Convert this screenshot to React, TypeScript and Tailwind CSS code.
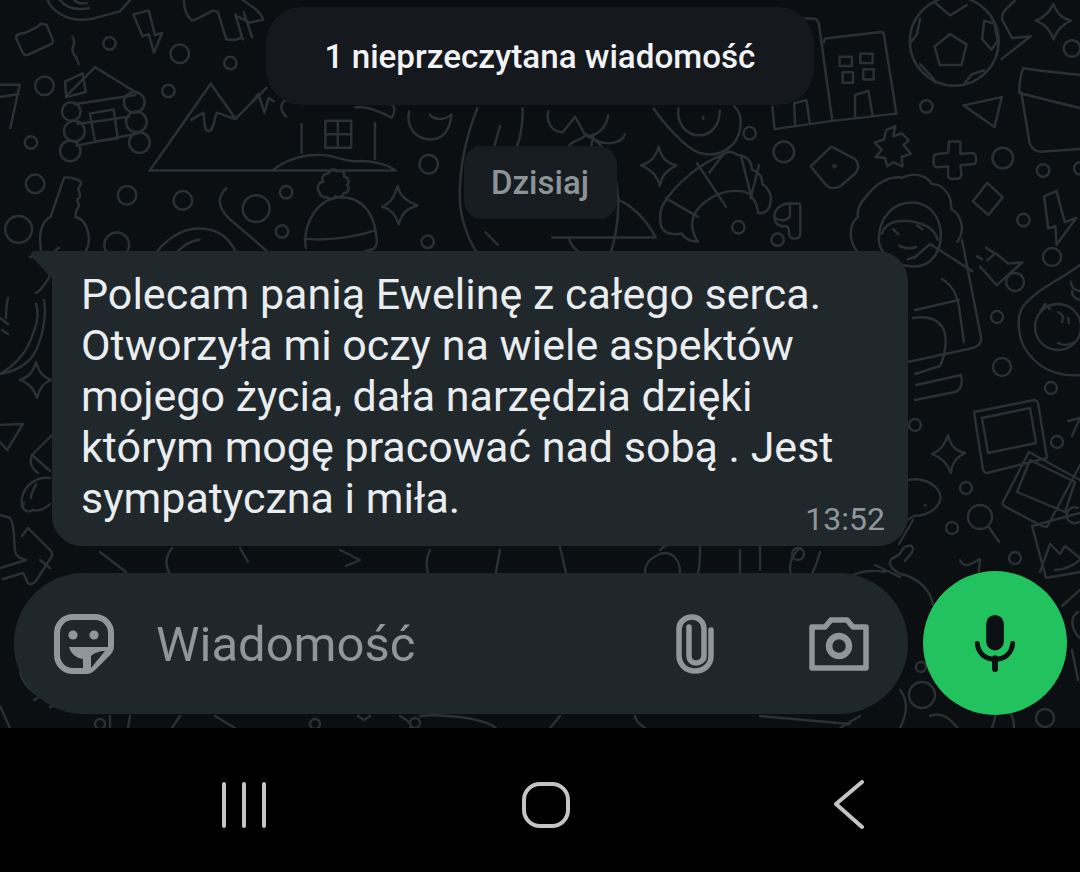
import React from 'react';

const leftDots: [number, number, number][] = [
    [106, 42, 6], [174, 52, 9], [223, 61, 6], [43, 83, 9], [163, 88, 6], [30, 138, 6], [34, 178, 9],
    [123, 189, 9], [177, 194, 9], [18, 222, 13], [113, 237, 12], [248, 202, 13], [277, 186, 6],
    [273, 224, 6], [414, 234, 6], [415, 159, 9],
];
const rightDots: [number, number, number][] = [
    [743, 129, 6], [776, 147, 10], [914, 103, 6], [988, 153, 10], [1027, 165, 6], [1008, 213, 6],
    [732, 220, 6], [770, 232, 6], [1055, 47, 8], [1063, 163, 6],
];
const lowerDots: [number, number, number][] = [
    [1052, 257, 9], [1015, 282, 9], [997, 317, 6], [1002, 367, 9], [1051, 388, 6], [1057, 442, 6],
    [915, 425, 6], [966, 488, 6], [952, 528, 6], [1015, 558, 6], [798, 554, 6], [921, 667, 5],
    [922, 695, 13], [1045, 718, 9], [415, 723, 5], [100, 724, 5], [315, 724, 5],
];

// wallpaper drawing, sits behind the chat
const Doodles = () => (
    <svg className="absolute inset-0 h-full w-full" viewBox="0 0 1080 728" fill="none" stroke="#2b3034" strokeWidth="2.4" strokeLinecap="round" strokeLinejoin="round">
        {lowerDots.map(([cx, cy, r], i) => <circle key={i} cx={cx} cy={cy} r={r} />)}

        {/* left half of the top */}
        <g transform="scale(1.033)">
            {leftDots.map(([cx, cy, r], i) => <circle key={i} cx={cx} cy={cy} r={r} />)}
            <path d="M24 32l12-6 3-3 6 1 6 14c1 3 0 4-2 5l-22 10c-3 1-4 0-5-2l-6-13c-1-3 0-4 2-5zM46 0c6 14 24 22 44 18l26-7 10-11M58 0c6 8 16 10 28 8M72 0c3 3 7 4 12 3" />
            <path d="M129 14l15-4 6 24 7-2-8 19-5-18-6 2zM70 36c6 6-4 11 2 17 3 3 3 6 4 9" />
            <path d="M178 0c0 8 2 15 8 20 6-2 12-6 17-8 2-2 5-2 8 0l8 26c10 2 14-1 15-3l-6-20 14 7 13-3c-3-8-10-12-20-19M228 14l7 24M236 12l8 24" />
            {/* cabin */}
            <path d="M64 93l28-28 39 24M63 79l17-8 3 18-19 5-1-15M72 101l59-9M75 120l50-7M74 141l60-12" />
            <circle cx="69" cy="108" r="9" /><circle cx="72" cy="127" r="10" /><circle cx="68" cy="146" r="10" />
            <circle cx="130" cy="99" r="10" /><circle cx="132" cy="118" r="10" /><circle cx="135" cy="138" r="10" />
            <path d="M87 110l23-4 4 28-22 3zM-2 82h21l-9 42M0 94l18-3" />
            {/* mountains and house */}
            <path d="M145 165l59-84 24 34 30-30M185 116l12-7c1 7 0 18 5 18s5-12 8-18l17 6M243 100l7-9 6 18 4-14 5 3" />
            <path d="M145 165h238c-8-6-24-10-37-9-14 1-22-7-40-6-17 0-33 7-42 15M292 148v-28M363 154v-35M277 113c-8-8-5-18 5-16l25-5M344 104c10-2 24 4 35 10 4-6 4-12-2-14" />
            <path d="M315 117h25v26h-25zM327 117v26M315 130h25M396 108c-3 16 7 27 21 27 12 0 19-10 20-24-6 5-16 6-21 0" />
            {/* key */}
            <path d="M62 172c4-1 14 1 16 4 2 3-3 5-2 8 1 3 3 6 0 8-4 2 2 5 0 8-2 3-3 7-3 10 8 2 12 10 13 20 1 9-5 16-10 26M62 172l-13 38c-8 4-11 14-10 24l1 16M57 240a5 5 0 1 0 6 5" />
            {/* hat */}
            <path d="M296 240c-3-25 12-48 34-49 24 0 32 20 34 35M295 231c15 2 45 0 68-8 3 10 2 16-2 18-22 8-45 12-64 10M309 186c-4-8 2-10 4-10-3-6 2-8 5-8 1-4 6-6 8-2 4-2 8 0 7 5 4 0 6 5 3 8 3 3 1 8-3 8-1 3-5 5-8 3-2 3-6 3-8 1-3 1-7-1-8-5z" />
            <path d="M385 180c2 10 8 14 19 19-10 3-15 7-18 18-3-10-9-15-16-17 9-4 12-10 15-20zM219 182c-12 12-5 24 8 34l44 38M145 254c10-18 30-37 56-32 18 3 28 18 30 32M165 254c5-10 14-20 28-22" />
            <path d="M462 105c-10 25-17 55-17 85 0 25 12 50 22 62M506 105c0 24-4 40-14 50M484 122l-5 18M470 225l12 12" />
        </g>

        {/* right half of the top */}
        <g transform="translate(540 0) scale(1.033) translate(-540 0)">
            {rightDots.map(([cx, cy, r], i) => <circle key={i} cx={cx} cy={cy} r={r} />)}
            <path d="M548 108c-2 8 2 20 14 20l12-15 10 18c-6 6-14 4-18 14M606 112c-2 10-8 18-20 20l14 6c10 2 20-1 22-8" />
            <path d="M585 130c14 8 26 20 30 55 2 18 0 40-8 65M555 148l-8 14M592 130l-3 14M603 250l-15 14" />
            <path d="M552 230h100c-10-20-30-42-62-42-12 0-24 5-36 14M568 230c2 12 18 22 34 18" />
            {/* egg */}
            <path d="M650 105c8 12 30 38 44 43 22 6 38-8 40-25 1-9-1-16-6-20M674 105c-2 16 9 26 20 26 12 0 20-10 20-24M698 113l0 2" />
            <path d="M655 142c2 10 7 16 17 18-8 4-14 9-16 20-2-10-9-16-18-20 9-2 14-8 17-18z" />
            <path d="M1037 4c4 10 9 14 17 16-8 3-13 8-17 18-3-9-9-15-17-18 8-3 13-8 17-16z" />
            {/* croissant */}
            <path d="M717 150c-22 8-46 28-58 48-3 6-3 14-2 20 2 8 12 10 20 8 3 5 8 8 16 8-6-8-7-18-4-26 6-10 16-18 30-22 10-2 18-2 24 2 6 6 8 14 8 18 6 2 12-4 12-10 2-8-3-15-8-18 1-8-5-12-10-14 0-10-8-14-14-14-5-4-10-4-14 0zM717 150l-13 17M692 158l28 42M735 153l9 35M752 160l-8 32M662 192l31 18" />
            <path d="M822 142l-20 19 14 17c4 5 10 5 15 2l14-12c4-4 4-10 0-14z" />
            <circle cx="825" cy="161" r="1" />
            <path d="M791 197h-9c-10 0-16 7-15 14 0 5 4 8 8 8h3c3 0 3 3 3 6 0 5 2 6 6 6s5-2 5-6v-26M782 197v12c-2 4-8 6-15 2" />
            {/* building */}
            <path d="M766 18h38c3 0 5 2 6 5l13 94-56 8-2-22M815 41c0-2 1-4 3-4l52-6c2 0 3 1 3 3l12 76-62 7" />
            <path d="M830 55h12v9h-12zM850 52h12v9h-12zM833 70h10v10h-10zM853 67h10v10h-10zM845 112l0-20 13-4 4 24M787 122l-1-22 12-3 3 21" />
            {/* ball */}
            <circle cx="941" cy="40" r="43" />
            <path d="M937 33l16 10-5 20h-21l-5-18zM923 3l14 12 16-10M970 20l10 3 3 17-6 8-9-10zM908 18l-3 15-7 9M950 82l8-10 12-4M908 62l12 13 3 5" />
            <path d="M988 20l9 17 18-2-28 22M1000 0l-10 10c-3 4-3 8-2 10" />
            <path d="M950 102l37-8-7 29zM980 123l7-29" />
            {/* pot */}
            <path d="M1008 66c25 4 50 6 75 8M1008 66c-3 6-4 18-4 24l80 20M1006 90l8 49c2 5 5 7 10 8l58-4" />
            <path d="M884 122l-2 10 8-3 7 7-5 4 7 9-9 3 1 9-9-4-6 4-2-8-9-1 6-7-7-7 9-3 2-9zM936 137h11v12l11-1c2 0 4 2 4 4v4c0 2-2 3-4 3l-11 1 1 9c0 2-2 4-4 4h-6c-2 0-3-2-3-4v-8l-10 1c-2 0-4-2-4-4v-5c0-3 2-4 4-4l10-1z" />
            <path d="M973 177l15 14-14 17-15-13z" />
            <path d="M1028 190l12-5 8 30 11-4-19 26-1-18-7 2z" />
            {/* flower with face */}
            <path d="M856 190c10-14 24-20 35-18 10-6 24-2 28 6 12 0 20 12 19 24 12 8 13 22 6 32M856 190c-4 4-10 12-8 20-6 4-9 14-6 24 2 6 6 12 12 16" />
            <path d="M868 232c0-22 14-36 32-36 17 0 28 14 28 32 0 14-8 30-26 30-16 0-34-12-34-26zM871 226c4-14 24-14 36-10 10 3 16 8 18 16M882 222l5 5M905 218l5 4M888 238c5 3 12 3 16 1M896 251l9-3" />
            <path d="M973 252l8-7 12 10 14-1-25 22-16-18M972 240l8 5M963 248l5 3" />
        </g>

        {/* right of bubble */}
        <path d="M914 258l16-14 42 27M962 240l19 97c1 6-2 9-8 11l-65 14M942 279c10 6 15 15 17 28l5 35M915 310l44-10M913 318c12-2 24 0 30 10 5 10 2 28-3 38l-25 8M916 385l45-10c2 8 0 15-6 17l-40 8" />
        <path d="M1080 265c-20 15-40 22-56 40-8 10-6 30 0 42 12 20 30 30 56 28" />
        <circle cx="1058" cy="327" r="23" />
        <path d="M1040 312l5-8 5 5M1058 312c5 2 6 6 4 10M1068 318l1 5M1058 343c6 3 12 2 17-1M1071 282c0 6 4 8 9 9M1072 291c0 6 4 8 8 9" />
        <path d="M974 412l60-12c2 0 3 1 4 3l9 55-60 15c-2 0-3-1-4-3l-9-58zM982 418l48-10 6 35-48 10z" />
        <path d="M1029 452l51 28M1029 452l-26 50c-1 2 0 3 1 4l38 20 5 1 33-62M1030 460l45 22-10 30-48-20z" />
        <path d="M948 435c2 10 7 16 17 18-8 4-13 9-14 20-3-9-9-15-19-19 8-3 13-9 16-19z" />
        <circle cx="980" cy="517" r="12" />
        <path d="M988 526l11 16M1068 421l12-3-8 18" />
        <path d="M1032 526l48-13M1032 526l14 52 34-6M1040 572l10-28 10 10 5-8 15 12M1078 508a8 8 0 1 0 1 14" />
        <path d="M908 480c10-2 22 0 30 10 8 12-6 26-24 26l-10 6M913 520l-14 24M925 505l1 1" />

        {/* under bubble, behind the button */}
        <path d="M905 575c-8-1-16-8-15-13 1-6 8-4 11-10 4-8 12-8 12-3 0 5-6 8-8 12M885 572c-10-2-26-2-36 6-12 10-18 26-8 40M905 575c15 5 26 16 28 30M875 565l25 12M960 560c4 8 8 6 20-1l-3 28-16-4" />
        <path d="M1080 590l-18 16M1055 570c10 0 20-6 25-10M1078 612c-10 6-5 20 2 26M1078 680l-6-30" />
        <path d="M660 550c8-10 40-12 50-8M700 547c0 10 0 20-2 26M740 550v24M760 546v24M800 548c-10 8-12 22-8 28M645 572c0-8 5-14 15-18 12-4 20 6 20 18M820 552c-2 8-4 14-8 22" />
        <path d="M430 550c-4 8-4 16-2 24M500 550l-4 22M560 547l6 26M340 550l20 10-14 6M240 548l8 14M172 548c-8 10-6 20-2 26M100 552l26 20M40 560l10 8" />
        <path d="M930 716c14-5 20 4 28 12M860 716l-20 12M980 690c8 4 6 12 10 16 8 4 6 10 2 22M900 690c10 12 6 26 0 38M1000 710c8-2 14 4 14 18M760 716l90 8" />
        <path d="M400 716c10 6 12 8 10 12M420 716c14-2 60 0 76 12M560 716l-10 12M635 716c0 4 4 8 10 12M130 716l-2 12M180 716l-8 12M215 716l20 12M370 716l-6 4-6-4" />

        {/* left of bubble */}
        <path d="M30 257c22-6 28 12 14 28-4 6-8 8-8 8M36 304c4 12 0 24-8 42-4 8-14 20-28 28M44 300c3 16-2 40-10 54-8 12-22 18-34 20M8 298c-2 8-2 14-2 20M0 318l8 6M2 330l6 4" />
        <path d="M36 362c3 10 6 14 15 18-8 3-12 9-14 18-3-9-7-14-17-18 9-3 13-8 16-18z" />
        <path d="M-2 425l25-1-16 26-7-8M52 435l-20 20 18 16M32 455c-3 8 0 14 6 18" />
        <path d="M50 478c-14-2-26 8-28 20-2 12 6 16 10 12 10 2 16-4 18-6M36 484c-2 6-6 10-5 14M24 503l-2 4" />
        <path d="M0 515l10 3c6 8 3 30 6 36 2 4 6 5 10 6l-26 8M22 536l6-8 22 22c3 3 3 6 0 9l-14 22c-3 3-6 4-8 2l-5-10-20 6" />
        <path d="M20 672c4 18 22 30 52 32M25 676c8 16 24 24 44 26M34 700l14-8M50 707l14-4M0 706l10 22M110 716v12" />
    </svg>
);

const StickerIcon = () => (
    <svg viewBox="0 0 60 60" className="h-[60px] w-[60px]" fill="none">
        <path d="M19 3h22c9 0 16 7 16 16v13c0 3-1 5-3 7L39 54c-2 2-4 3-7 3H19C10 57 3 50 3 41V19C3 10 10 3 19 3z" stroke="#8e979b" strokeWidth="6" />
        <circle cx="19" cy="21" r="4.6" fill="#8e979b" />
        <circle cx="40" cy="21" r="4.6" fill="#8e979b" />
        <path d="M15 33h41L37 57h-8V45c-7-1-12-5-14-12z" fill="#8e979b" />
        <path d="M37 42c3-3 9-5 14-5L37 54z" fill="#1f272b" />
    </svg>
);

const ClipIcon = () => (
    <svg viewBox="0 0 38 60" className="h-[60px] w-[38px]" fill="none" stroke="#8e979b" strokeLinecap="round">
        <path d="M35 16v26c0 9-7 15-16 15C9 57 3 50 3 41V15C3 8 9 3 16 3s12 5 12 12v27c0 4-4 7-8 7s-7-3-7-7V13" strokeWidth="5.5" />
    </svg>
);

const CameraIcon = () => (
    <svg viewBox="0 0 60 54" className="h-[54px] w-[60px]" fill="none">
        <path d="M3 10h13l6-7h16l6 7h13v41H3z" stroke="#8e979b" strokeWidth="5.5" strokeLinejoin="round" />
        <circle cx="30" cy="29" r="10" stroke="#8e979b" strokeWidth="6.5" />
    </svg>
);

const MicIcon = () => (
    <svg viewBox="0 0 42 58" className="h-[57px] w-[42px]" fill="none">
        <rect x="12" y="0" width="18" height="36" rx="9" fill="#0b1014" />
        <path d="M3 29c1 10 8 16 18 16s17-6 18-16" stroke="#0b1014" strokeWidth="5" strokeLinecap="round" />
        <path d="M21 44v11" stroke="#0b1014" strokeWidth="6" strokeLinecap="round" />
    </svg>
);

const App: React.FC = () => {
    return (
        <div className="flex h-[872px] w-[1080px] flex-col overflow-hidden bg-black font-['Roboto',sans-serif]">
            <div className="relative h-[728px] bg-[#0b0f12]">
                <Doodles />

                <div className="relative flex flex-col items-center pt-[7px]">
                    <div className="flex h-[98px] w-[548px] items-center justify-center rounded-[36px] bg-[#15191d] pt-[2px] text-[33.2px] font-medium text-[#f1f3f4]">
                        1 nieprzeczytana wiadomość
                    </div>
                    <div className="mt-[41px] flex h-[73px] w-[153px] items-center justify-center rounded-[18px] bg-[#171c20] text-[33px] font-medium text-[#8d9498]">
                        Dzisiaj
                    </div>
                </div>

                {/* message bubble */}
                <div className="relative ml-[52px] mt-[32px] h-[295px] w-[856px] rounded-[30px] rounded-tl-none bg-[#20282c] pl-[29px] pt-[18px]">
                    <svg viewBox="0 0 24 30" className="absolute left-[-22px] top-0 h-[30px] w-[24px]">
                        <path d="M24 0H5C1 0 0 3 2 6l22 24z" fill="#20282c" />
                    </svg>
                    <p className="text-[43px] leading-[51px] text-[#e9edef]">
                        Polecam panią Ewelinę z całego serca.<br />
                        Otworzyła mi oczy na wiele aspektów<br />
                        mojego życia, dała narzędzia dzięki<br />
                        którym mogę pracować nad sobą . Jest<br />
                        sympatyczna i miła.
                    </p>
                    <span className="absolute bottom-[9px] right-[23px] text-[32px] leading-[36px] text-[#8e979b]">13:52</span>
                </div>

                {/* composer */}
                <div className="relative ml-[14px] mt-[25px] flex items-center">
                    <div className="mt-[1px] flex h-[141px] w-[894px] items-center rounded-[70px] bg-[#1f272b] pl-[40px]">
                        <StickerIcon />
                        <span className="ml-[42px] mt-[2px] flex-1 text-[49px] text-[#8e979b]">Wiadomość</span>
                        <ClipIcon />
                        <div className="ml-[95px] mr-[39px]"><CameraIcon /></div>
                    </div>
                    <button className="ml-[15px] flex h-[144px] w-[144px] items-center justify-center rounded-full bg-[#22c35e] pt-[1px]">
                        <MicIcon />
                    </button>
                </div>
            </div>

            {/* android nav bar */}
            <div className="flex h-[144px] items-center bg-black pl-[222px] pt-[10px]">
                <div className="flex gap-[16px]">
                    <span className="h-[46px] w-1 rounded-full bg-[#c4c4c4]" />
                    <span className="h-[46px] w-1 rounded-full bg-[#c4c4c4]" />
                    <span className="h-[46px] w-1 rounded-full bg-[#c4c4c4]" />
                </div>
                <span className="ml-[256px] h-[46px] w-[48px] rounded-[18px] border-[4px] border-[#c4c4c4]" />
                <svg viewBox="0 0 32 50" className="ml-[263px] h-[50px] w-[32px]" fill="none" stroke="#c4c4c4" strokeWidth="4" strokeLinecap="round" strokeLinejoin="round">
                    <path d="M29 2L3 24l26 23" />
                </svg>
            </div>
        </div>
    );
};

export default App;
